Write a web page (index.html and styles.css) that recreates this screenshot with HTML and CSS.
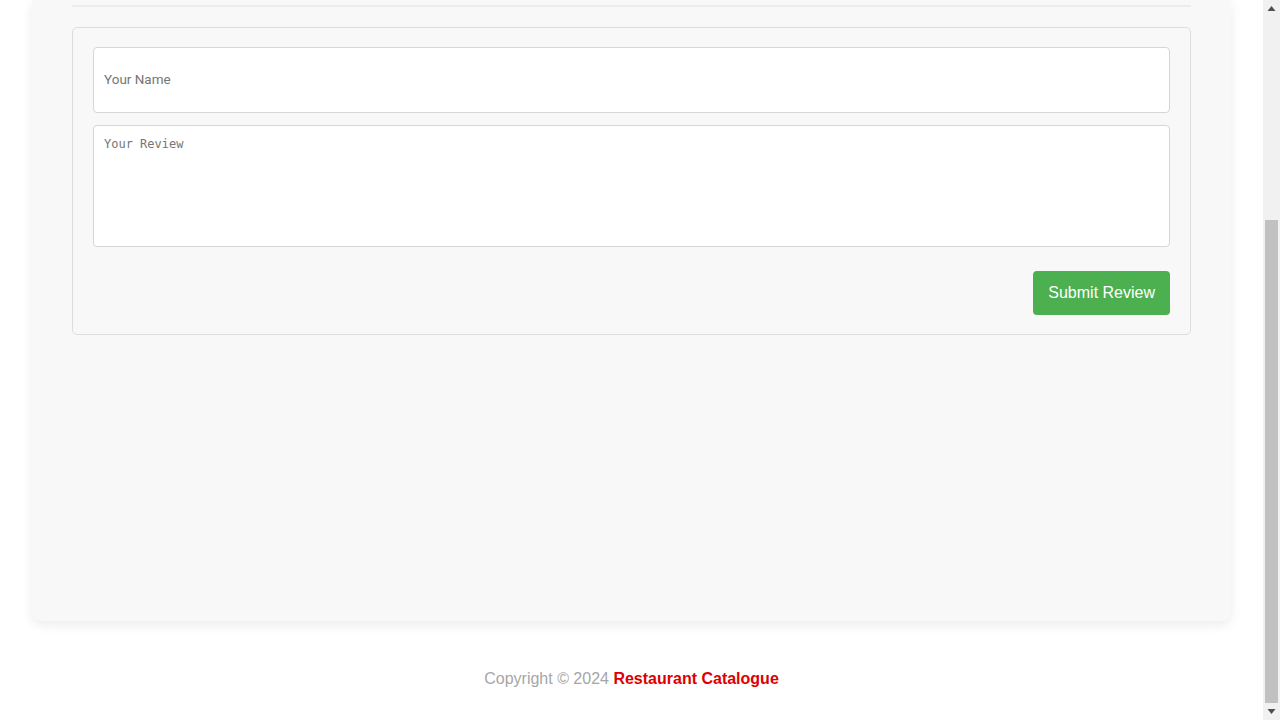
FILE: index.html
```html
<!DOCTYPE html>
<html lang="en">
<head>
<meta charset="utf-8">
<title>Restaurant Catalogue</title>
<link rel="stylesheet" href="styles.css">
</head>
<body>
<div class="screen">
  <div class="content">
    <main class="card">
      <hr class="divider">
      <form class="review-form">
        <input class="field name-field" type="text" placeholder="Your Name">
        <textarea class="field review-field" placeholder="Your Review"></textarea>
        <div class="actions">
          <button type="button" class="submit-btn">Submit Review</button>
        </div>
      </form>
    </main>
    <footer class="footer">
      <p>Copyright © 2024 <strong class="brand">Restaurant Catalogue</strong></p>
    </footer>
  </div>
  <div class="scrollbar" aria-hidden="true">
    <div class="sb-btn">
      <svg width="17" height="17" viewBox="0 0 17 17"><path d="M4.5 11 L8.5 6 L12.5 11 Z" fill="#505050"/></svg>
    </div>
    <div class="sb-track">
      <div class="sb-thumb"></div>
    </div>
    <div class="sb-btn">
      <svg width="17" height="17" viewBox="0 0 17 17"><path d="M4.5 6 L8.5 11 L12.5 6 Z" fill="#505050"/></svg>
    </div>
  </div>
</div>
</body>
</html>
```

FILE: styles.css
```css
html, body {
  margin: 0;
  padding: 0;
  background: #ffffff;
  font-family: "Liberation Sans", Arial, sans-serif;
}

.screen {
  display: flex;
  height: 720px;
  overflow: hidden;
}

.content {
  flex: 1;
  min-width: 0;
  padding: 0 32px;
  display: flex;
  flex-direction: column;
}

.card {
  background: #f8f8f8;
  border-radius: 0 0 9px 9px;
  box-shadow: 0 4px 12px rgba(0, 0, 0, 0.08);
  padding: 5px 40px 286px;
}

.divider {
  border: none;
  border-top: 2px solid #ececec;
  margin: 0 0 20px;
}

.review-form {
  border: 1px solid #dddddd;
  border-radius: 5px;
  padding: 19px 20px 19px;
  display: flex;
  flex-direction: column;
  gap: 12px;
}

.field {
  display: block;
  width: 100%;
  box-sizing: border-box;
  border: 1px solid #d6d6d6;
  border-radius: 4px;
  background: #ffffff;
  color: #333;
  margin: 0;
}

.field::placeholder {
  color: #757575;
}

.name-field {
  height: 66px;
  padding: 0 10px 2px;
  font-family: Roboto, "Noto Sans", sans-serif;
  font-size: 13.5px;
}

.review-field {
  height: 122px;
  padding: 11px 10px;
  resize: none;
  font-family: "DejaVu Sans Mono", "Liberation Mono", monospace;
  font-size: 12px;
}

.actions {
  display: flex;
  justify-content: flex-end;
  margin-top: 12px;
}

.submit-btn {
  background: #4caf50;
  color: #ffffff;
  border: none;
  border-radius: 4px;
  height: 44px;
  padding: 0 15px;
  font-family: "Liberation Sans", Arial, sans-serif;
  font-size: 16px;
  cursor: pointer;
}

.footer {
  text-align: center;
  padding: 49px 0 32px;
}

.footer p {
  margin: 0;
  font-size: 16px;
  line-height: 18px;
  color: #a6a6a6;
}

.brand {
  color: #dd0000;
  font-weight: bold;
}

.scrollbar {
  flex: none;
  width: 17px;
  background: #f1f1f1;
  display: flex;
  flex-direction: column;
}

.sb-btn {
  height: 17px;
  flex: none;
}

.sb-btn svg {
  display: block;
}

.sb-track {
  flex: 1;
  display: flex;
  flex-direction: column;
  justify-content: flex-end;
  padding: 0 2px;
}

.sb-thumb {
  height: 483px;
  background: #c1c1c1;
}
```
